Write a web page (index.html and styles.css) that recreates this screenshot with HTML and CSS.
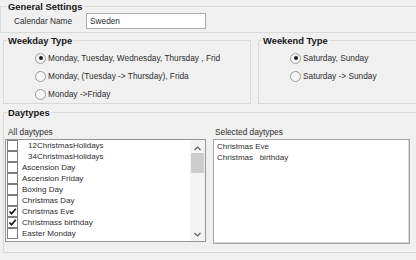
FILE: index.html
```html
<!DOCTYPE html>
<html lang="en">
<head>
  <meta charset="UTF-8">
  <title>Calendar Settings</title>
  <link rel="stylesheet" href="styles.css">
</head>
<body>
  <div class="form">
    <!-- General -->
    <fieldset class="group general">
      <legend>General Settings</legend>
      <div class="field-row">
        <label class="field-label" for="calName">Calendar Name</label>
        <input class="textbox" id="calName" type="text" value="Sweden">
      </div>
    </fieldset>

    <!-- Weekday / weekend -->
    <div class="type-row">
      <fieldset class="group weekday">
        <legend>Weekday Type</legend>
        <div class="radio-list">
          <div class="radio-item"><span class="radio checked"></span>Monday, Tuesday, Wednesday, Thursday , Frid</div>
          <div class="radio-item"><span class="radio"></span>Monday, (Tuesday -&gt; Thursday), Frida</div>
          <div class="radio-item"><span class="radio"></span>Monday -&gt;Friday</div>
        </div>
      </fieldset>
      <fieldset class="group weekend">
        <legend>Weekend Type</legend>
        <div class="radio-list">
          <div class="radio-item"><span class="radio checked"></span>Saturday, Sunday</div>
          <div class="radio-item"><span class="radio"></span>Saturday -&gt; Sunday</div>
        </div>
      </fieldset>
    </div>

    <!-- Daytypes -->
    <fieldset class="group daytypes">
      <legend>Daytypes</legend>
      <div class="lists">
        <div class="list-col">
          <div class="list-label">All daytypes</div>
          <div class="listbox all">
            <div class="items">
              <div class="check-item"><span class="check"></span><span class="indent">12ChristmasHolidays</span></div>
              <div class="check-item"><span class="check"></span><span class="indent">34ChristmasHolidays</span></div>
              <div class="check-item"><span class="check"></span>Ascension Day</div>
              <div class="check-item"><span class="check"></span>Ascension Friday</div>
              <div class="check-item"><span class="check"></span>Boxing Day</div>
              <div class="check-item"><span class="check"></span>Christmas Day</div>
              <div class="check-item"><span class="check"><svg width="9" height="9" viewBox="0 0 9 9"><path d="M1.5 4.5 L3.5 6.8 L7.8 1.8" fill="none" stroke="#111" stroke-width="1.6"/></svg></span>Christmas Eve</div>
              <div class="check-item"><span class="check"><svg width="9" height="9" viewBox="0 0 9 9"><path d="M1.5 4.5 L3.5 6.8 L7.8 1.8" fill="none" stroke="#111" stroke-width="1.6"/></svg></span>Christmass birthday</div>
              <div class="check-item"><span class="check"></span>Easter Monday</div>
            </div>
            <div class="scrollbar">
              <div class="sb-btn up"><svg width="7" height="5" viewBox="0 0 7 5"><path d="M0.5 4 L3.5 1 L6.5 4" fill="none" stroke="#606060" stroke-width="1.2"/></svg></div>
              <div class="sb-track"><div class="sb-thumb"></div></div>
              <div class="sb-btn"><svg width="7" height="5" viewBox="0 0 7 5"><path d="M0.5 1 L3.5 4 L6.5 1" fill="none" stroke="#606060" stroke-width="1.2"/></svg></div>
            </div>
          </div>
        </div>
        <div class="list-col">
          <div class="list-label selected-label">Selected daytypes</div>
          <div class="listbox selected">
            <div class="sel-item">Christmas Eve</div>
            <div class="sel-item">Christmas   birthday</div>
          </div>
        </div>
      </div>
    </fieldset>
  </div>
</body>
</html>
```

FILE: styles.css
```css
/* base */
body {
  margin: 0;
  width: 416px;
  height: 260px;
  overflow: hidden;
  background-color: #f0f0f0;
  font-family: 'Liberation Sans', Arial, sans-serif;
  font-size: 8.3px;
  color: #2e2e2e;
}

/* the window is cut off on the right, so the groups have no right edge */
.form {
  width: 413px;
  margin-left: 3px;
}

/* group boxes */
.group {
  margin: 0;
  padding: 0 0 0 1px;
  border: 1px solid #d9d9d9;
  border-right: none;
  box-sizing: border-box;
  min-width: 0;
}

.group legend {
  margin-left: 2px;
  padding: 0 1px;
  font-size: 9.4px;
  font-weight: bold;
  line-height: 13px;
  color: #161616;
}

.general {
  margin-left: -3px;
  padding-left: 4px;
  padding-bottom: 3px;
}

.field-row {
  display: flex;
  align-items: center;
}

.field-label {
  width: 72px;
  margin-left: 9px;
}

.textbox {
  width: 120px;
  height: 16px;
  box-sizing: border-box;
  margin: 0;
  padding: 0 3px;
  border: 1px solid #abadb3;
  background-color: #fff;
  font-family: inherit;
  font-size: 8.3px;
  color: #2e2e2e;
  outline: none;
}

/* weekday / weekend */
.type-row {
  display: flex;
  gap: 7px;
  margin-top: 1px;
}

.weekday {
  width: 248px;
  flex: none;
  border-right: 1px solid #d9d9d9;
}

.weekend {
  flex: 1;
}

.radio-list {
  padding: 2px 0 0 30px;
}

.radio-item {
  display: flex;
  align-items: center;
  height: 18px;
  white-space: nowrap;
}

.radio {
  width: 11px;
  height: 11px;
  box-sizing: border-box;
  margin-right: 2px;
  border: 1px solid #9a9b9b;
  border-radius: 50%;
  background-color: #f6f6f6;
  display: flex;
  align-items: center;
  justify-content: center;
}

.radio.checked::after {
  content: '';
  width: 4px;
  height: 4px;
  border-radius: 50%;
  background-color: #1e1e1e;
}

/* daytypes */
.daytypes {
  margin-top: 2px;
  padding-bottom: 8px;
}

.lists {
  display: flex;
  align-items: flex-start;
  gap: 7px;
}

.list-label {
  margin-top: 7px;
  margin-bottom: 1px;
  padding-left: 3px;
  line-height: 12px;
}

.selected-label {
  padding-left: 2px;
}

.listbox {
  box-sizing: border-box;
  border: 1px solid #8f959b;
  background-color: #fff;
}

.listbox.all {
  width: 201px;
  height: 103px;
  display: flex;
}

.listbox.selected {
  width: 197px;
  height: 105px;
  padding: 1px 0 0 3px;
  border-color: #a3a8ad;
  box-shadow: inset -1px -1px 0 #d6d6d6;
}

.items {
  flex: 1;
  font-size: 8px;
}

.check-item {
  display: flex;
  align-items: center;
  height: 11px;
  white-space: nowrap;
}

.check {
  width: 11px;
  height: 11px;
  box-sizing: border-box;
  margin: 0 4px 0 1px;
  border: 1px solid #7d7d7d;
  background-color: #fff;
  display: flex;
  align-items: center;
  justify-content: center;
  flex: none;
}

.indent {
  padding-left: 6px;
}

.sel-item {
  height: 11px;
  line-height: 11px;
  font-size: 8px;
  white-space: pre;
}

/* scrollbar */
.scrollbar {
  width: 15px;
  display: flex;
  flex-direction: column;
  background-color: #f4f4f4;
}

.sb-btn {
  height: 13px;
  display: flex;
  align-items: center;
  justify-content: center;
}

.sb-btn.up {
  box-sizing: border-box;
  padding-top: 3px;
}

.sb-track {
  flex: 1;
}

.sb-thumb {
  height: 20px;
  margin: 0 1px;
  background-color: #cdcdcd;
}
```
